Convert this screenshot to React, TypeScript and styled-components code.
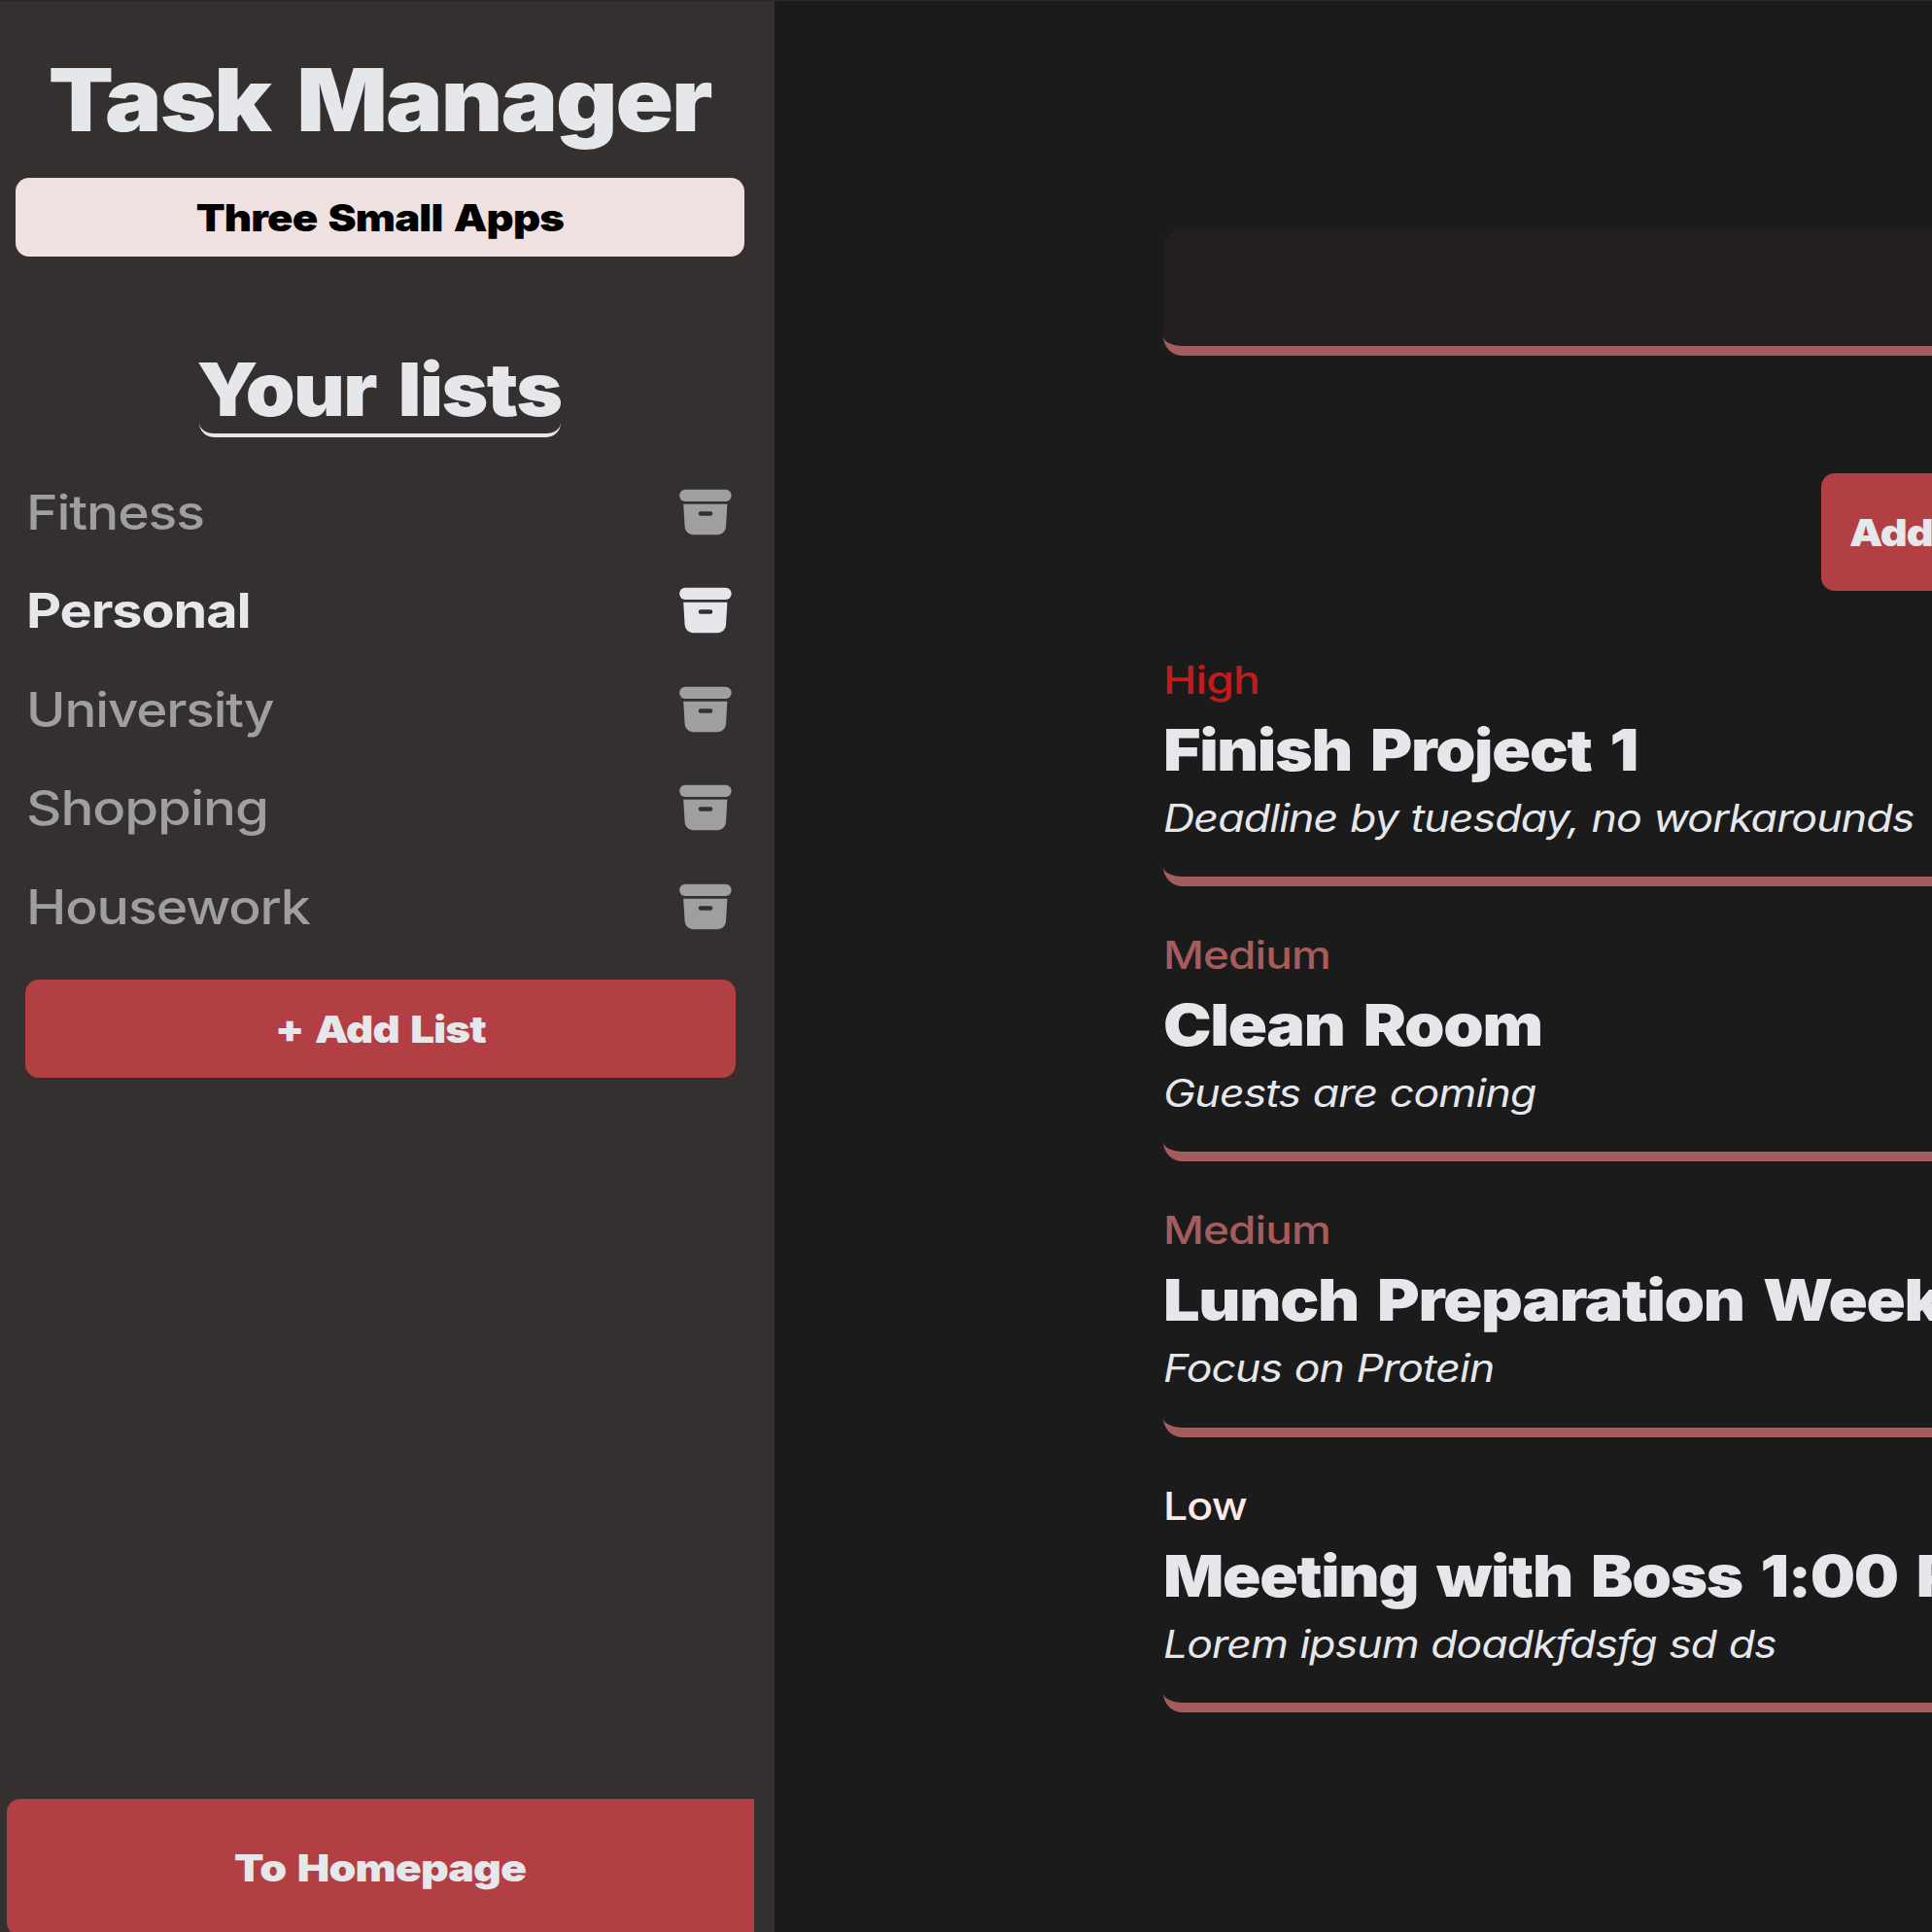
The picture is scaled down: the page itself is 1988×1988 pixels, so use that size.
import React from "react";
import styled, { createGlobalStyle } from "styled-components";

const colors = {
  page: "#1b1b1b",
  sidebar: "#353030",
  text: "#e5e7eb",
  muted: "#9f9ea0",
  accent: "#b23f43",
  line: "#a55c5c",
  blush: "#f0e1e1",
  field: "#251e1e",
};

const GlobalStyle = createGlobalStyle`
  *, *::before, *::after { box-sizing: border-box; }
  html, body { margin: 0; height: 100%; overflow: hidden; background: ${colors.page}; }
  body { font-family: Inter, "Open Sans", sans-serif; color: ${colors.text}; }
  h1, h2, h3, p, ul { margin: 0; padding: 0; }
  ul { list-style: none; }
  button { font: inherit; border: 0; padding: 0; }
`;

const Page = styled.div`
  display: flex;
  height: 100vh;
  overflow: hidden;
  border-top: 1px solid #2b2a2a;
`;

/* Widens the letterforms; the anchor is the side the text is aligned to. */
const Wide = styled.span<{ $stretch: number; $anchor?: "left" | "center" }>`
  display: inline-block;
  margin-right: 0.02em;
  white-space: nowrap;
  letter-spacing: -0.02em;
  transform: scaleX(${(p) => p.$stretch});
  transform-origin: ${(p) => p.$anchor ?? "left"} center;
`;

const Sidebar = styled.aside`
  display: flex;
  flex-direction: column;
  flex: 0 0 797px;
  height: 100%;
  padding: 47px 14px 0 0;
  overflow: hidden;
  background: ${colors.sidebar};
`;

const AppTitle = styled.h1`
  font-size: 90px;
  font-weight: 900;
  line-height: 110px;
  text-align: center;
  word-spacing: 0.1em;
`;

const BaseButton = styled.button`
  display: flex;
  align-items: center;
  justify-content: center;
  flex-shrink: 0;
  border-radius: 14px;
  background: ${colors.accent};
  color: ${colors.text};
  font-size: 39px;
  font-weight: 900;
  word-spacing: 0.08em;
`;

const AppsButton = styled(BaseButton)`
  height: 81px;
  margin: 25px 17px 0 16px;
  background: ${colors.blush};
  color: #000;
`;

const ListsHeading = styled.h2`
  display: flex;
  justify-content: center;
  align-self: center;
  width: 372px;
  margin-top: 92px;
  margin-right: 2px;
  border-bottom: 4px solid ${colors.text};
  border-radius: 0 0 15px 15px;
  font-size: 75.5px;
  font-weight: 900;
  line-height: 90px;
  word-spacing: 0.1em;
`;

const Lists = styled.ul`
  margin-top: 26px;
  padding: 0 30px 0 27px;
`;

const ListRow = styled.li<{ $active?: boolean }>`
  display: flex;
  align-items: center;
  justify-content: space-between;
  height: 101.5px;
  color: ${(p) => (p.$active ? colors.text : colors.muted)};
  font-size: 49.5px;
  font-weight: ${(p) => (p.$active ? 750 : 500)};
`;

const ArchiveSvg = styled.svg`
  width: 54px;
  height: 48px;
  fill: currentColor;
`;

const AddListButton = styled(BaseButton)`
  height: 101.5px;
  margin: 24px 26px 0;
`;

const HomeButton = styled(BaseButton)`
  height: 141px;
  margin: auto 7px -4px;
  border-radius: 14px 0 0 14px;
`;

const Main = styled.main`
  display: flex;
  flex-direction: column;
  flex: 1;
  min-width: 0;
  padding: 233.5px 0 0 400px;
  overflow: hidden;
`;

const Field = styled.div`
  flex-shrink: 0;
  height: 131px;
  border-bottom: 10px solid ${colors.line};
  border-radius: 20px 0 0 20px;
  background: ${colors.field};
`;

const AddTaskButton = styled(BaseButton)`
  justify-content: flex-start;
  align-self: flex-end;
  width: 114.5px;
  height: 121px;
  margin-top: 121px;
  padding-left: 29px;
  border-radius: 14px 0 0 14px;
  overflow: hidden;
`;

const Tasks = styled.ul`
  display: flex;
  flex-direction: column;
  gap: 46px;
  margin-top: 67.2px;
`;

const Task = styled.li`
  height: 237.4px;
  padding-bottom: 35px;
  border-bottom: 10px solid ${colors.line};
  border-radius: 0 0 0 20px;
`;

const Priority = styled.p<{ $color: string }>`
  color: ${(p) => p.$color};
  font-size: 39px;
  font-weight: 500;
  line-height: 50px;
`;

const TaskTitle = styled.h3`
  margin-top: 9px;
  font-size: 59.5px;
  font-weight: 900;
  line-height: 74px;
  word-spacing: 0.11em;
`;

const Description = styled.p`
  margin-top: 9px;
  font-size: 39px;
  font-style: italic;
  font-weight: 450;
  font-feature-settings: "cv11";
  line-height: 50px;
  word-spacing: 0.02em;
`;

const ArchiveIcon = () => (
  <ArchiveSvg viewBox="0 0 54 48" aria-hidden="true">
    <rect x="0.2" y="0.8" width="53.4" height="12.2" rx="5.8" />
    <path
      fillRule="evenodd"
      d="M4.2 15.8H49.4L48 39A8.5 8.5 0 0 1 39.6 47.2H14.2A8.5 8.5 0 0 1 5.6 39ZM22 23.2A2.3 2.3 0 0 0 22 27.8H32A2.3 2.3 0 0 0 32 23.2Z"
    />
  </ArchiveSvg>
);

const lists = [
  { name: "Fitness", stretch: 1.117 },
  { name: "Personal", stretch: 1.127, active: true },
  { name: "University", stretch: 1.105 },
  { name: "Shopping", stretch: 1.142 },
  { name: "Housework", stretch: 1.121 },
];

const priorities = {
  High: { color: "#c01c1c", stretch: 1.185 },
  Medium: { color: colors.line, stretch: 1.178 },
  Low: { color: "#fce9e9", stretch: 1.145 },
};

const tasks: {
  priority: keyof typeof priorities;
  title: string;
  titleStretch: number;
  note: string;
  noteStretch: number;
}[] = [
  { priority: "High", title: "Finish Project 1", titleStretch: 1.108, note: "Deadline by tuesday, no workarounds", noteStretch: 1.146 },
  { priority: "Medium", title: "Clean Room", titleStretch: 1.117, note: "Guests are coming", noteStretch: 1.144 },
  { priority: "Medium", title: "Lunch Preparation Week", titleStretch: 1.119, note: "Focus on Protein", noteStretch: 1.142 },
  { priority: "Low", title: "Meeting with Boss 1:00 P", titleStretch: 1.096, note: "Lorem ipsum doadkfdsfg sd ds", noteStretch: 1.14 },
];

export default function App() {
  return (
    <>
      <GlobalStyle />
      <Page>
        <Sidebar>
          <AppTitle>
            <Wide $stretch={1.09} $anchor="center">Task Manager</Wide>
          </AppTitle>
          <AppsButton>
            <Wide $stretch={1.12} $anchor="center">Three Small Apps</Wide>
          </AppsButton>
          <ListsHeading>
            <Wide $stretch={1.078} $anchor="center">Your lists</Wide>
          </ListsHeading>
          <Lists>
            {lists.map((list) => (
              <ListRow key={list.name} $active={list.active}>
                <Wide $stretch={list.stretch}>{list.name}</Wide>
                <ArchiveIcon />
              </ListRow>
            ))}
          </Lists>
          <AddListButton>
            <Wide $stretch={1.124} $anchor="center">+ Add List</Wide>
          </AddListButton>
          <HomeButton>
            <Wide $stretch={1.145} $anchor="center">To Homepage</Wide>
          </HomeButton>
        </Sidebar>
        <Main>
          <Field />
          <AddTaskButton>
            <Wide $stretch={1.11}>Add</Wide>
          </AddTaskButton>
          <Tasks>
            {tasks.map((task) => (
              <Task key={task.title}>
                <Priority $color={priorities[task.priority].color}>
                  <Wide $stretch={priorities[task.priority].stretch}>{task.priority}</Wide>
                </Priority>
                <TaskTitle>
                  <Wide $stretch={task.titleStretch}>{task.title}</Wide>
                </TaskTitle>
                <Description>
                  <Wide $stretch={task.noteStretch}>{task.note}</Wide>
                </Description>
              </Task>
            ))}
          </Tasks>
        </Main>
      </Page>
    </>
  );
}
